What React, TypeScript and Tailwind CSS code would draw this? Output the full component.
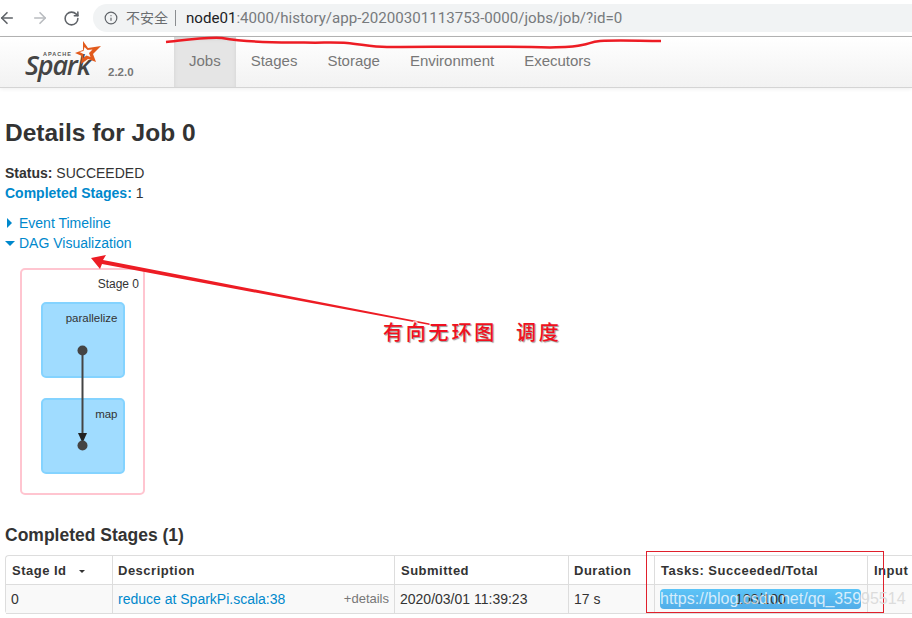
import React from "react";
import { ArrowLeft, ArrowRight, RotateCw, Info } from "lucide-react";

const sans = "font-['Liberation_Sans','Noto_Sans_CJK_SC',sans-serif]";

function Logo() {
  return (
    <div className="relative h-full w-[148px] shrink-0">
      <span className="absolute left-[25px] top-[8px] text-[27px] leading-[40px] font-semibold italic tracking-[-1.2px] text-[#444] font-['Open_Sans',sans-serif]">
        Spark
      </span>
      <span className="absolute left-[43px] top-[13px] text-[5.500px] leading-[8px] font-bold tracking-[1px] text-[#555]">
        APACHE
      </span>
      <svg className="absolute left-[72px] top-[2px]" width="32" height="30" viewBox="0 0 32 30">
        <path
          d="M11 2l5 7 13-2-8 8 3 8-8-3-7 5 1-8-7-3 8-3z M12.500 8l-1 4-4 1 4 2-.5 4 3.500-2.500 4 1.500-1.500-4 3.500-3.500-5 .5z"
          fill="#e25a1c"
          fillRule="evenodd"
        />
      </svg>
      <span className="absolute left-[108px] top-[28px] text-[11.500px] leading-[14px] font-bold text-[#777]">2.2.0</span>
    </div>
  );
}

function NavItem({ label, active }: { label: string; active?: boolean }) {
  return (
    <div
      className={
        active
          ? "flex h-full items-center px-[15px] pb-[2px] text-[15px] text-[#777] bg-[#e5e5e5] shadow-[inset_0_2px_4px_rgba(0,0,0,0.08)]"
          : "flex h-full items-center px-[15px] pb-[2px] text-[15px] text-[#777]"
      }
    >
      {label}
    </div>
  );
}

const th = "border-r border-b border-[#ddd] px-[6px] pt-[2px] text-left align-middle text-[13px] font-bold tracking-[0.5px] text-[#333]";
const td = "border-r border-b border-[#ddd] align-middle text-[14px] text-[#333]";

function StageBox({ label }: { label: string }) {
  return (
    <div className="relative h-[76px] w-[84px] rounded-[5px] border-2 border-[#84d3ff] bg-[#a0dcff]">
      <span className="absolute right-[5px] top-[7px] text-[11.500px] leading-[14px] text-[#333]">{label}</span>
    </div>
  );
}

export default function App() {
  return (
    <div className={`relative h-[618px] w-[912px] overflow-hidden bg-white ${sans}`}>
      {/* Browser chrome */}
      <div className="flex h-[37px] items-center border-b border-[#b4b4b4] bg-white">
        <div className="flex w-[93px] shrink-0 items-center">
          <ArrowLeft className="ml-[-2px] text-[#5f6368]" size={18} strokeWidth={2.2} />
          <ArrowRight className="ml-[15px] text-[#b9bcc0]" size={18} strokeWidth={2.2} />
          <RotateCw className="ml-[14px] text-[#5f6368]" size={17} strokeWidth={2.2} />
        </div>
        <div className="flex h-[28px] flex-1 items-center rounded-l-[14px] bg-[#f1f3f4] pl-[11px]">
          <Info className="text-[#5f6368]" size={14} strokeWidth={2} />
          <span className="ml-[8px] text-[14px] text-[#6a6d70]">不安全</span>
          <span className="ml-[7px] h-[16px] w-px bg-[#8a8d90]" />
          <span className="ml-[10px] text-[15.100px] text-[#777a7d] font-['Roboto',sans-serif]">
            <span className="text-[#202124]">node01</span>:4000/history/app-20200301113753-0000/jobs/job/?id=0
          </span>
        </div>
      </div>

      {/* Spark navbar */}
      <div className="flex h-[51px] border-b border-[#d4d4d4] bg-gradient-to-b from-white to-[#f2f2f2] shadow-[0_1px_4px_rgba(0,0,0,0.07)]">
        <Logo />
        <div className="ml-[26px] flex h-full">
          <NavItem label="Jobs" active />
          <NavItem label="Stages" />
          <NavItem label="Storage" />
          <NavItem label="Environment" />
          <NavItem label="Executors" />
        </div>
      </div>

      {/* Page */}
      <div className="px-[5px]">
        <h3 className="mt-[30px] text-[24.500px] leading-[30px] font-bold text-[#333]">Details for Job 0</h3>

        <div className="mt-[15px] text-[14px] leading-[20px] text-[#333]">
          <div>
            <b>Status:</b> SUCCEEDED
          </div>
          <div>
            <b className="text-[#0088cc]">Completed Stages:</b> 1
          </div>
        </div>

        <div className="mt-[10px] text-[14px] leading-[20px] text-[#0088cc]">
          <div className="flex items-center">
            <span className="ml-[2px] h-0 w-0 border-y-[5px] border-l-[5px] border-y-transparent border-l-[#0088cc]" />
            <span className="ml-[7px]">Event Timeline</span>
          </div>
          <div className="flex items-center">
            <span className="mt-[1px] h-0 w-0 border-x-[5px] border-t-[5px] border-x-transparent border-t-[#0088cc]" />
            <span className="ml-[4px]">DAG Visualization</span>
          </div>
        </div>

        {/* DAG */}
        <div className="relative ml-[15px] mt-[15px] flex h-[227px] w-[125px] flex-col items-center rounded-[5px] border-2 border-[#ffc5d0] bg-white">
          <span className="mt-[7px] self-end pr-[4px] text-[12px] leading-[14px] text-[#333]">Stage 0</span>
          <div className="mt-[11px]">
            <StageBox label="parallelize" />
          </div>
          <div className="mt-[20px]">
            <StageBox label="map" />
          </div>
          <svg className="absolute left-[53px] top-[70px]" width="16" height="112" viewBox="0 0 16 112">
            <circle cx="7.500" cy="10.500" r="5" fill="#444" />
            <line x1="7.500" y1="10" x2="7.500" y2="98" stroke="#444" strokeWidth="2" />
            <path d="M3 93h9l-4.500 10z" fill="#222" />
            <circle cx="7.500" cy="105.500" r="5" fill="#444" />
          </svg>
        </div>

        <h4 className="mt-[29px] text-[17.500px] leading-[22px] font-bold text-[#333]">Completed Stages (1)</h4>

        {/* Table */}
        <table className="mt-[9px] w-[1000px] table-fixed border-separate border-spacing-0 rounded-l-[4px] border-l border-t border-[#ddd]">
          <colgroup>
            <col className="w-[107px]" />
            <col className="w-[282px]" />
            <col className="w-[174px]" />
            <col className="w-[86px]" />
            <col className="w-[213px]" />
            <col />
          </colgroup>
          <thead>
            <tr className="h-[29px]">
              <th className={th}>
                Stage Id <span className="ml-[8px] inline-block h-0 w-0 -translate-y-[2px] border-x-[3px] border-t-[3px] border-x-transparent border-t-[#333]" />
              </th>
              <th className={`${th} !pl-[5px]`}>Description</th>
              <th className={th}>Submitted</th>
              <th className={`${th} !pl-[5px]`}>Duration</th>
              <th className={th}>Tasks: Succeeded/Total</th>
              <th className={th}>Input</th>
            </tr>
          </thead>
          <tbody>
            <tr className="h-[29px] bg-[#f9f9f9]">
              <td className={`${td} pl-[5px]`}>0</td>
              <td className={`${td} pl-[5px] pr-[5px]`}>
                <div className="flex items-center justify-between">
                  <span className="text-[#0088cc]">reduce at SparkPi.scala:38</span>
                  <span className="text-[13px] text-[#777]">+details</span>
                </div>
              </td>
              <td className={`${td} pl-[5px]`}>2020/03/01 11:39:23</td>
              <td className={`${td} pl-[5px]`}>17 s</td>
              <td className={`${td} pl-[5px]`}>
                <div className="h-[20px] w-[201px] rounded-[4px] bg-gradient-to-b from-[#5cc4f7] to-[#52ade8] text-center text-[14px] leading-[20px] text-[#333]">
                  100/100
                </div>
              </td>
              <td className={td} />
            </tr>
          </tbody>
        </table>
      </div>

      {/* Annotations lying over the page */}
      <svg className="pointer-events-none absolute left-0 top-0" width="912" height="618" viewBox="0 0 912 618">
        <path
          d="M166 42C185 40 205 37 222 38C240 41 270 43 304 42.500C320 43 335 42 347 43C360 44 372 47 387 47C440 47 500 46 550 47.500C565 47 575 47 582 45C590 44 590 42 600 41C620 40 640 41 661 41"
          fill="none"
          stroke="#ed1c24"
          strokeWidth="2.500"
        />
        <path d="M91 258L106 255L103 260L435 324.500L435 326L102 264L100 269z" fill="#ed1c24" />
        <rect x="646.500" y="551.500" width="237" height="61" fill="none" stroke="#e0202c" strokeWidth="1" />
      </svg>

      <div className="absolute left-[383px] top-[319px] flex text-[20px] leading-[26px] font-medium text-[#f01020] [font-family:'Noto_Sans_CJK_SC',serif] [text-shadow:1px_1px_1px_#999,-1px_-1px_0_#fff,1px_-1px_0_#fff,-1px_1px_0_#fff]">
        <span className="tracking-[2.800px]">有向无环图</span>
        <span className="ml-[19px] tracking-[2.800px]">调度</span>
      </div>

      <div className="absolute left-[660px] top-[589px] whitespace-nowrap text-[16px] leading-[20px]">
        <span className="text-white/75">https://blog.csdn.net/qq_359</span>
        <span className="text-[#dcdcdc]">95514</span>
      </div>
    </div>
  );
}
